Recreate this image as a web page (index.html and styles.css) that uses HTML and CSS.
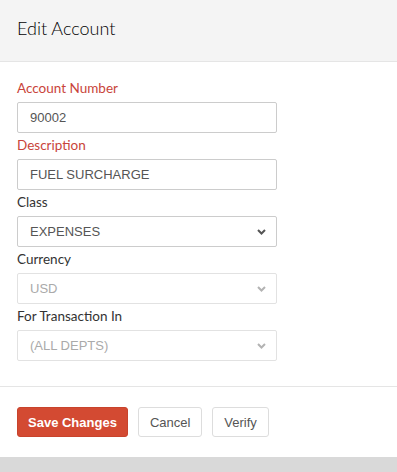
FILE: index.html
```html
<!DOCTYPE html>
<html lang="en">
<head>
    <meta charset="UTF-8">
    <meta name="viewport" content="width=device-width, initial-scale=1.0">
    <title>Edit Account</title>
    <link rel="stylesheet" href="styles.css">
</head>
<body>
    <div class="modal">
        <div class="modal-header">
            <h4 class="modal-title">Edit Account</h4>
        </div>
        <div class="modal-body">
            <label class="lbl required">Account Number</label>
            <input type="text" class="campo" value="90002">
            <label class="lbl required">Description</label>
            <input type="text" class="campo" value="FUEL SURCHARGE">
            <label class="lbl">Class</label>
            <div class="select-wrap">
                <select class="campo">
                    <option>EXPENSES</option>
                </select>
                <svg class="seta" width="9" height="6" viewBox="0 0 9 6"><path d="M1 1 L4.5 4.5 L8 1" fill="none" stroke="#555" stroke-width="2"/></svg>
            </div>
            <label class="lbl">Currency</label>
            <div class="select-wrap">
                <select class="campo" disabled>
                    <option>USD</option>
                </select>
                <svg class="seta" width="9" height="6" viewBox="0 0 9 6"><path d="M1 1 L4.5 4.5 L8 1" fill="none" stroke="#b3b3b3" stroke-width="2"/></svg>
            </div>
            <label class="lbl">For Transaction In</label>
            <div class="select-wrap">
                <select class="campo" disabled>
                    <option>(ALL DEPTS)</option>
                </select>
                <svg class="seta" width="9" height="6" viewBox="0 0 9 6"><path d="M1 1 L4.5 4.5 L8 1" fill="none" stroke="#b3b3b3" stroke-width="2"/></svg>
            </div>
        </div>
        <div class="modal-footer">
            <button class="btn btn-salvar">Save Changes</button>
            <button class="btn btn-padrao">Cancel</button>
            <button class="btn btn-padrao">Verify</button>
        </div>
    </div>
</body>
</html>
```
FILE: styles.css
```css
body {
    margin: 0;
    background-color: #d9d9d9;
    font-family: "Liberation Sans", Arial, sans-serif;
}
.modal {
    background: #ffffff;
    box-shadow: 0 6px 16px rgba(0, 0, 0, 0.75);
}
.modal-header {
    background-color: #f4f4f4;
    border-bottom: 1px solid #e5e5e5;
    height: 62px;
    box-sizing: border-box;
    padding: 17px 17px 0;
}
.modal-title {
    margin: 0;
    font-family: Lato, "Liberation Sans", sans-serif;
    font-weight: 300;
    font-size: 18px;
    line-height: 22px;
    color: #000;
}
.modal-body {
    padding: 17px 17px 22px;
    display: flex;
    flex-direction: column;
    align-items: flex-start;
}
.lbl {
    font-family: Lato, "Liberation Sans", sans-serif;
    font-size: 13.5px;
    font-weight: 400;
    line-height: 19px;
    color: #333;
    margin-bottom: 4px;
}
.lbl.required {
    color: #c9443a;
}
.campo {
    display: block;
    width: 260px;
    height: 31px;
    box-sizing: border-box;
    margin: 0 0 3px;
    padding: 0 12px;
    border: 1px solid #cccccc;
    border-radius: 2px;
    background: #ffffff;
    font-family: "Liberation Sans", Arial, sans-serif;
    font-size: 13px;
    color: #555;
    outline: none;
}
select.campo {
    appearance: none;
    -webkit-appearance: none;
}
select.campo:disabled {
    border-color: #e2e2e2;
    color: #aaa;
    background: #ffffff;
    opacity: 1;
}
.select-wrap {
    position: relative;
}
.seta {
    position: absolute;
    right: 11px;
    top: 13px;
}
.modal-footer {
    border-top: 1px solid #e5e5e5;
    padding: 20px 17px;
    display: flex;
    gap: 10px;
}
.btn {
    height: 30px;
    padding: 0 11px;
    border-radius: 3px;
    font-family: "Liberation Sans", Arial, sans-serif;
    font-size: 13px;
    cursor: pointer;
}
.btn-salvar {
    background-color: #d34a32;
    border: 1px solid #c8432c;
    color: #ffffff;
    font-weight: 700;
    padding: 0 10px;
}
.btn-padrao {
    background-color: #ffffff;
    border: 1px solid #dddddd;
    color: #555;
}
```
